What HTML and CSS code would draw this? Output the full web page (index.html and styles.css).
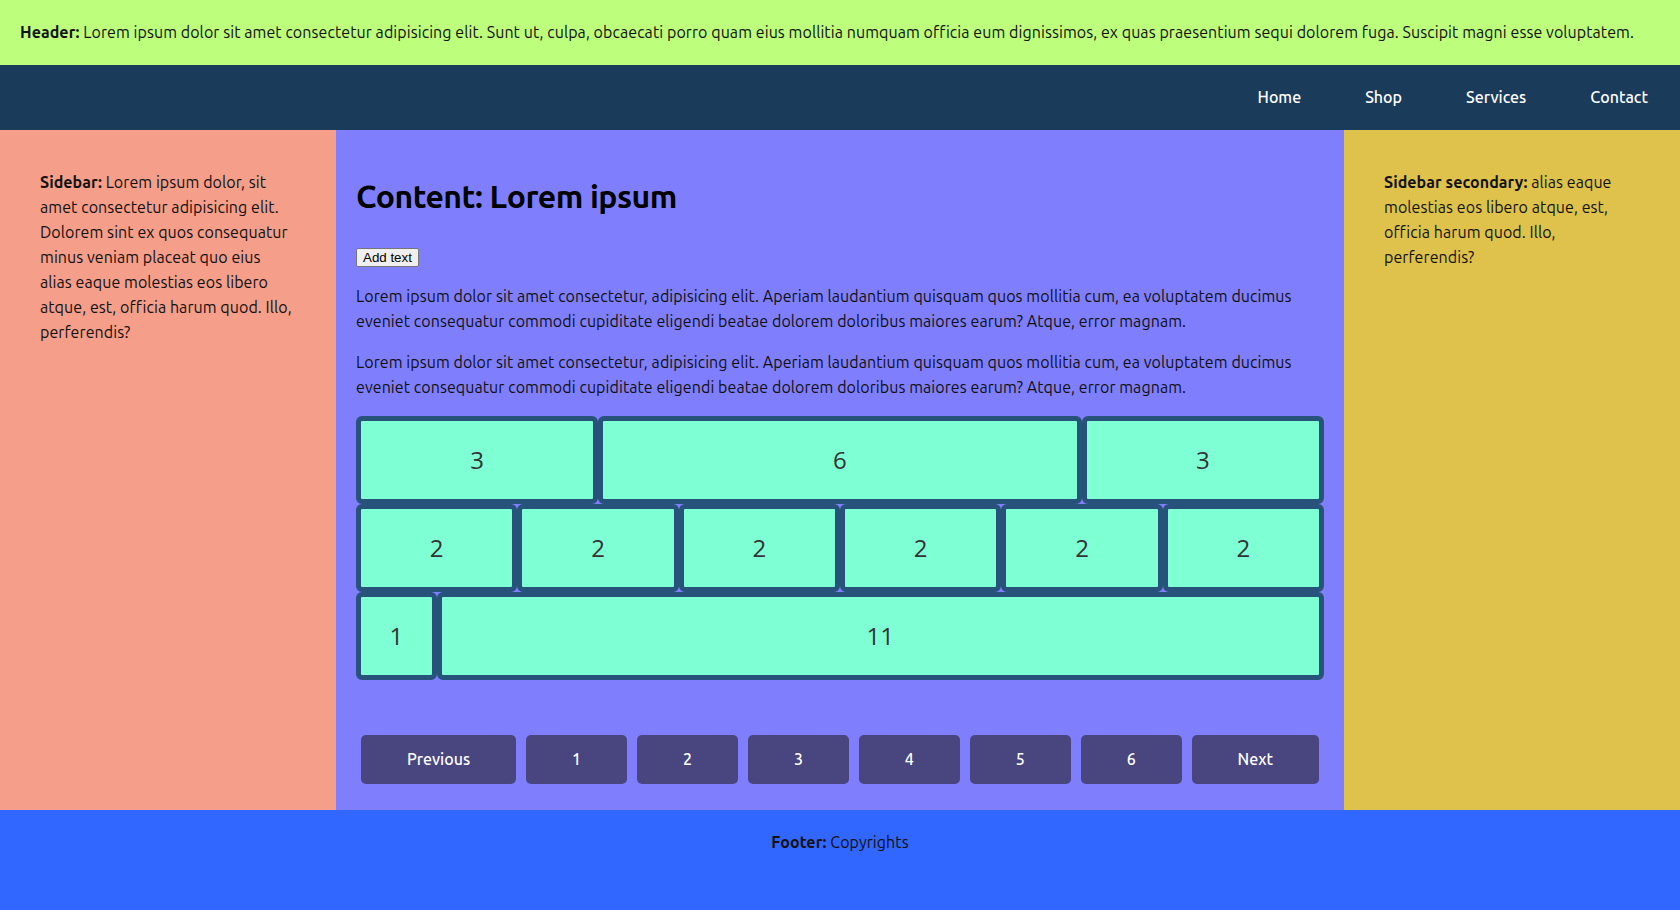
FILE: index.html
```html
<!DOCTYPE html>
<html lang="en">
<head>
<meta charset="utf-8">
<title>Layout</title>
<link rel="stylesheet" href="styles.css">
</head>
<body>
<div class="page">
  <header class="header">
    <p><strong>Header:</strong> Lorem ipsum dolor sit amet consectetur adipisicing elit. Sunt ut, culpa, obcaecati porro quam eius mollitia numquam officia eum dignissimos, ex quas praesentium sequi dolorem fuga. Suscipit magni esse voluptatem.</p>
  </header>
  <nav class="nav">
    <a href="#">Home</a>
    <a href="#">Shop</a>
    <a href="#">Services</a>
    <a href="#">Contact</a>
  </nav>
  <main class="main">
    <aside class="sidebar">
      <p><strong>Sidebar:</strong> Lorem ipsum dolor, sit amet consectetur adipisicing elit. Dolorem sint ex quos consequatur minus veniam placeat quo eius alias eaque molestias eos libero atque, est, officia harum quod. Illo, perferendis?</p>
    </aside>
    <section class="content">
      <h1>Content: Lorem ipsum</h1>
      <div class="actions"><button class="add-btn" type="button">Add text</button></div>
      <p>Lorem ipsum dolor sit amet consectetur, adipisicing elit. Aperiam laudantium quisquam quos mollitia cum, ea voluptatem ducimus eveniet consequatur commodi cupiditate eligendi beatae dolorem doloribus maiores earum? Atque, error magnam.</p>
      <p>Lorem ipsum dolor sit amet consectetur, adipisicing elit. Aperiam laudantium quisquam quos mollitia cum, ea voluptatem ducimus eveniet consequatur commodi cupiditate eligendi beatae dolorem doloribus maiores earum? Atque, error magnam.</p>
      <div class="grid">
        <div class="cell span-3">3</div>
        <div class="cell span-6">6</div>
        <div class="cell span-3">3</div>
        <div class="cell span-2">2</div>
        <div class="cell span-2">2</div>
        <div class="cell span-2">2</div>
        <div class="cell span-2">2</div>
        <div class="cell span-2">2</div>
        <div class="cell span-2">2</div>
        <div class="cell span-1">1</div>
        <div class="cell span-11">11</div>
      </div>
      <div class="pagination">
        <a href="#" class="page-btn">Previous</a>
        <a href="#" class="page-btn">1</a>
        <a href="#" class="page-btn">2</a>
        <a href="#" class="page-btn">3</a>
        <a href="#" class="page-btn">4</a>
        <a href="#" class="page-btn">5</a>
        <a href="#" class="page-btn">6</a>
        <a href="#" class="page-btn">Next</a>
      </div>
    </section>
    <aside class="sidebar sidebar-secondary">
      <p><strong>Sidebar secondary:</strong> alias eaque molestias eos libero atque, est, officia harum quod. Illo, perferendis?</p>
    </aside>
  </main>
  <footer class="footer">
    <p><strong>Footer:</strong> Copyrights</p>
  </footer>
</div>
</body>
</html>
```
FILE: styles.css
```css
* {
  box-sizing: border-box;
}

html, body {
  margin: 0;
  padding: 0;
}

body {
  font-family: Ubuntu, Lato, "Liberation Sans", sans-serif;
  font-size: 16px;
  line-height: 25px;
  letter-spacing: 0.07px;
  color: #111;
}

p {
  margin: 0;
}

.page {
  min-height: 100vh;
  display: grid;
  grid-template-rows: auto auto 1fr 100px;
}

.header {
  background: #bdfe7c;
  padding: 20px 20px;
}

.nav {
  background: #1b3b5a;
  display: flex;
  justify-content: flex-end;
  padding: 20px 0;
}

.nav a {
  color: #fff;
  text-decoration: none;
  font-weight: 500;
  letter-spacing: 0;
  padding: 0 32px;
}

.main {
  display: grid;
  grid-template-columns: 1fr 3fr 1fr;
}

.sidebar {
  background: #f59e8a;
  padding: 40px 41px 40px 40px;
}

.sidebar-secondary {
  background: #dec24b;
}

.content {
  background: #7f7ffe;
  padding: 20px;
}

.content h1 {
  font-size: 32px;
  line-height: 1.6;
  font-weight: 700;
  letter-spacing: -0.5px;
  margin: 21px 0;
  color: #000;
}

.content p {
  margin: 16px 0;
}

.add-btn {
  font-family: "Liberation Sans", Arial, sans-serif;
  font-size: 13.33px;
  letter-spacing: 0;
  padding: 1px 6px;
  border: 1px solid #767676;
  border-radius: 2px;
  background: #efefef;
  color: #000;
  vertical-align: middle;
}

.grid {
  display: grid;
  grid-template-columns: repeat(12, 1fr);
}

.cell {
  background: #7fffd4;
  border: 5px solid #275279;
  border-radius: 6px;
  padding: 24px 0;
  text-align: center;
  font-family: "Open Sans", "Noto Sans", sans-serif;
  font-size: 24px;
  line-height: 30px;
  letter-spacing: 0;
  color: #333;
}

.span-1 { grid-column: span 1; }
.span-2 { grid-column: span 2; }
.span-3 { grid-column: span 3; }
.span-6 { grid-column: span 6; }
.span-11 { grid-column: span 11; }

.pagination {
  display: flex;
  gap: 10px;
  margin-top: 55px;
  padding: 0 5px;
}

.page-btn {
  flex: 1 1 auto;
  background: #48457f;
  color: #fff;
  text-decoration: none;
  text-align: center;
  font-weight: 500;
  letter-spacing: 0;
  padding: 12px 10px;
  border-radius: 5px;
}

.footer {
  background: #3166ff;
  text-align: center;
  padding: 20px;
}
```
